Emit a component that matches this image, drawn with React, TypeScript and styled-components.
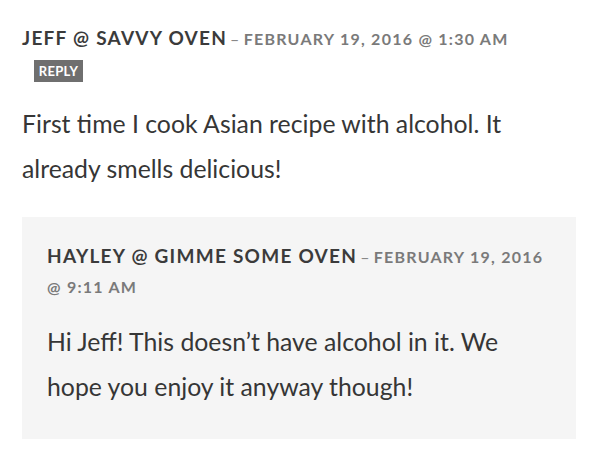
import React from "react";
import styled, { createGlobalStyle } from "styled-components";

const GlobalStyle = createGlobalStyle`
  body {
    margin: 0;
    background: #ffffff;
    font-family: Lato, "Liberation Sans", sans-serif;
  }
`;

const Thread = styled.section`
  width: 554px;
  padding: 23px 0 0 22px;
`;

const Comment = styled.article<{ $nested?: boolean }>`
  background: ${(p) => (p.$nested ? "#f5f5f5" : "transparent")};
  padding: ${(p) => (p.$nested ? "24px 25px 30px 25px" : "0")};
  margin-top: ${(p) => (p.$nested ? "26px" : "0")};
`;

const Meta = styled.div`
  line-height: 30px;
  text-transform: uppercase;
  letter-spacing: 1.25px;
`;

const Author = styled.span`
  font-size: 19px;
  font-weight: 700;
  color: #3b3b3b;
`;

const Dash = styled.span`
  font-size: 16px;
  color: #888;
  margin: 0 3px;
`;

const Stamp = styled.span`
  font-size: 16px;
  font-weight: 700;
  color: #7a7a7a;
`;

const ReplyButton = styled.button`
  display: block;
  margin: 6px 0 0 12px;
  height: 22px;
  width: 49px;
  padding: 0;
  border: 0;
  background: #6f6f6f;
  color: #fff;
  font-family: Lato, "Liberation Sans", sans-serif;
  font-size: 13px;
  font-weight: 700;
  letter-spacing: 0.3px;
  text-transform: uppercase;
`;

const Body = styled.p<{ $gap: number }>`
  margin: ${(p) => p.$gap}px 0 0;
  font-size: 24.8px;
  line-height: 45px;
  color: #363636;
`;

const App = () => {
  return (
    <>
      <GlobalStyle />
      <Thread>
        <Comment>
          <Meta>
            <Author>Jeff @ Savvy Oven</Author>
            <Dash>–</Dash>
            <Stamp>February 19, 2016 @ 1:30 am</Stamp>
          </Meta>
          <ReplyButton>Reply</ReplyButton>
          <Body $gap={19}>
            First time I cook Asian recipe with alcohol. It already smells
            delicious!
          </Body>
        </Comment>
        <Comment $nested>
          <Meta>
            <Author>Hayley @ Gimme Some Oven</Author>
            <Dash>–</Dash>
            <Stamp>February 19, 2016 @ 9:11 am</Stamp>
          </Meta>
          <Body $gap={17}>
            Hi Jeff! This doesn’t have alcohol in it. We hope you enjoy it
            anyway though!
          </Body>
        </Comment>
      </Thread>
    </>
  );
};

export default App;
